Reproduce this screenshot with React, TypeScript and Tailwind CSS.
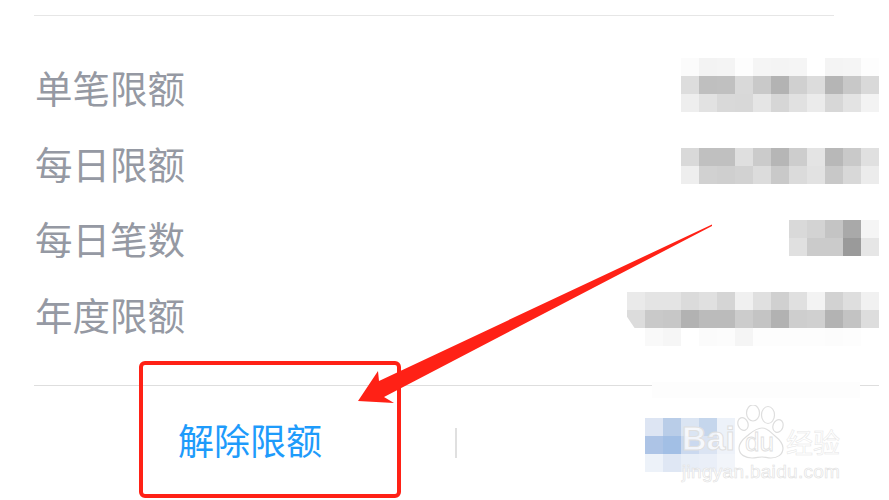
interface LimitRow {
  label: string;
  offset: string;
  cols: string;
  cells: string[];
  clips?: Record<number, string>;
}

const rows: LimitRow[] = [
  {
    label: "单笔限额",
    offset: "mt-[9px]",
    cols: "grid-cols-[repeat(11,18px)]",
    cells: [
      "#fbfbfb", "#f3f3f3", "#f4f4f4", "#fdfdfd", "#f5f5f5", "#f4f4f4", "#f5f5f5", "#ffffff", "#f4f4f4", "#f5f5f5", "#fdfdfd",
      "#dddddd", "#bfbfbf", "#c0c0c0", "#d9d9d9", "#c9c9c9", "#b3b3b3", "#d0d0d0", "#dcdcdc", "#b5b5b5", "#c8c8c8", "#d9d9d9",
      "#eeeeee", "#e2e2e2", "#d9d9d9", "#d8d8d8", "#e5e5e5", "#d6d6d6", "#e1e1e1", "#ebebeb", "#d7d7d7", "#e3e3e3", "#f3f3f3",
    ],
  },
  {
    label: "每日限额",
    offset: "mt-[23.5px]",
    cols: "grid-cols-[repeat(11,18px)]",
    cells: [
      "#d9d9d9", "#c0c0c0", "#c0c0c0", "#dfdfdf", "#cbcbcb", "#b6b6b6", "#cdcdcd", "#e4e4e4", "#b8b8b8", "#c9c9c9", "#e0e0e0",
      "#eeeeee", "#d1d1d1", "#cfcfcf", "#d2d2d2", "#dcdcdc", "#c9c9c9", "#dbdbdb", "#e2e2e2", "#c8c8c8", "#d8d8d8", "#ececec",
    ],
  },
  {
    label: "每日笔数",
    offset: "mt-[20px]",
    cols: "grid-cols-[repeat(5,18px)]",
    cells: [
      "#d9d9d9", "#d3d3d3", "#c4c4c4", "#a9a9a9", "#f5f5f5",
      "#e0e0e0", "#cbcbcb", "#cbcbcb", "#9a9a9a", "#e6e6e6",
    ],
  },
  {
    label: "年度限额",
    offset: "mt-[16.5px]",
    cols: "grid-cols-[repeat(14,18px)]",
    cells: [
      "#eaeaea", "#e4e4e4", "#e4e4e4", "#dbdbdb", "#e0e0e0", "#d5d5d5", "#f0f0f0", "#e0e0e0", "#d0d0d0", "#e0e0e0", "#f3f3f3", "#d2d2d2", "#dedede", "#f1f1f1",
      "#dcdcdc", "#c9c9c9", "#c7c7c7", "#b2b2b2", "#bbbbbb", "#bbbbbb", "#cccccc", "#c4c4c4", "#b2b2b2", "#cecece", "#d0d0d0", "#b3b3b3", "#c3c3c3", "#dddddd",
      "#ffffff", "#f9f9f9", "#f6f6f6", "#ffffff", "#fbfbfb", "#fcfcfc", "#f5f5f5", "#fdfdfd", "#fdfdfd", "#fdfdfd", "#fdfdfd", "#fcfcfc", "#fdfdfd", "#ffffff",
    ],
    // the left end of this bar is cut off diagonally in the screenshot
    clips: { 14: "polygon(0 0,100% 0,100% 100%,42% 100%,0 38%)" },
  },
];

const blueCells = [
  "#dde5f3", "#b9cde8", "#dbe5f3", "#c5d6ec", "#edf2f9",
  "#adc4e6", "#a2bfe5", "#cbd9ef", "#dbe4f3", "#eef2f9",
  "#edf2f9", "#dfe7f4", "#e8eef7", "#eaeff8", "#f2f5fa",
];

function Mosaic({ cells, cols, className, clips }: { cells: string[]; cols: string; className?: string; clips?: Record<number, string> }) {
  return (
    <div className={`grid auto-rows-[18px] ${cols} ${className ?? ""}`}>
      {cells.map((c, i) => (
        <div key={i} style={{ backgroundColor: c, clipPath: clips?.[i] }} />
      ))}
    </div>
  );
}

function Watermark() {
  return (
    <div className="absolute left-[682px] top-[405px] flex flex-col text-white font-['Liberation_Sans',sans-serif]">
      <div className="flex items-end h-[54px]">
        <span className="w-[55px] mb-[4px] text-[34px] leading-none font-bold text-white/75 [-webkit-text-stroke:1px_#dfdfdf]">Bai</span>
        <div className="grid place-items-center">
          <svg className="[grid-area:1/1]" width="48" height="54" viewBox="0 0 48 54" fill="#ffffff" fillOpacity="0.5" stroke="#dedede" strokeWidth="1.2">
            <ellipse cx="16" cy="8" rx="6.5" ry="8" />
            <ellipse cx="31" cy="10" rx="6.5" ry="8.5" />
            <ellipse cx="6" cy="19" rx="5" ry="6.5" transform="rotate(-20 6 19)" />
            <ellipse cx="41" cy="21" rx="5" ry="6.5" transform="rotate(20 41 21)" />
            <path d="M25 23c6 0 8 4 13 8 5 4 8 8 8 12 0 7-6 10-12 10-4 0-6-1-9-1-3 0-6 1-10 1-6 0-13-3-13-10 0-4 3-8 8-12 5-4 9-8 15-8z" />
          </svg>
          <span className="[grid-area:1/1] mt-[19px] mr-[3px] text-[26px] leading-none [-webkit-text-stroke:0.8px_#dedede]">du</span>
        </div>
        <span className="mb-[1px] ml-[1px] text-[27px] leading-[32px] whitespace-nowrap font-['Noto_Sans_CJK_SC',sans-serif] [-webkit-text-stroke:0.5px_#e6e6e6]">
          经验
        </span>
      </div>
      <span className="mt-[2px] text-[19px] leading-[22px] tracking-[0.3px] whitespace-nowrap [-webkit-text-stroke:0.6px_#e0e0e0]">
        jingyan.baidu.com
      </span>
    </div>
  );
}

export default function App() {
  return (
    <div className="relative w-[889px] h-[500px] overflow-hidden bg-white font-['Noto_Sans_CJK_SC',sans-serif]">
      <div className="mt-[15px] ml-[34px] mr-[55px] h-px bg-[#e6e6e6]" />

      <div className="mt-[33px]">
        {rows.map((r) => (
          <div key={r.label} className="h-[75.5px] flex justify-between items-center pl-[35px] pr-[10px]">
            <span className="text-[37.5px] leading-none text-[#9599a3]">{r.label}</span>
            <Mosaic cells={r.cells} cols={r.cols} clips={r.clips} className={`self-start ${r.offset}`} />
          </div>
        ))}
      </div>

      <div className="mt-[34px] ml-[34px] mr-[10px] h-px bg-[#dedede]" />

      <div className="h-[114px] flex items-center pl-[178px]">
        <span className="w-[277px] pb-[8px] text-[36px] leading-none text-[#1e9bfb]">解除限额</span>
        <div className="w-[2px] h-[30px] bg-[#e0e0e0]" />
        <Mosaic cells={blueCells} cols="grid-cols-[repeat(5,18px)]" className="ml-[188px] mt-[4px]" />
      </div>

      {/* whitened patch where the divider was painted over */}
      <div className="absolute left-[652px] top-[382px] w-[208px] h-[16px] bg-[#fdfdfd]" />

      <Watermark />

      {/* red annotation box + arrow */}
      <div className="absolute left-[139px] top-[361px] w-[262px] h-[137px] border-4 border-[#ff2116] rounded-[6px]" />
      <svg className="absolute left-0 top-0" width="889" height="500" viewBox="0 0 889 500">
        <polygon points="358,401 378,371 379,381 712,224.5 712,226 384,397 394,403" fill="#ff2116" />
      </svg>
    </div>
  );
}
